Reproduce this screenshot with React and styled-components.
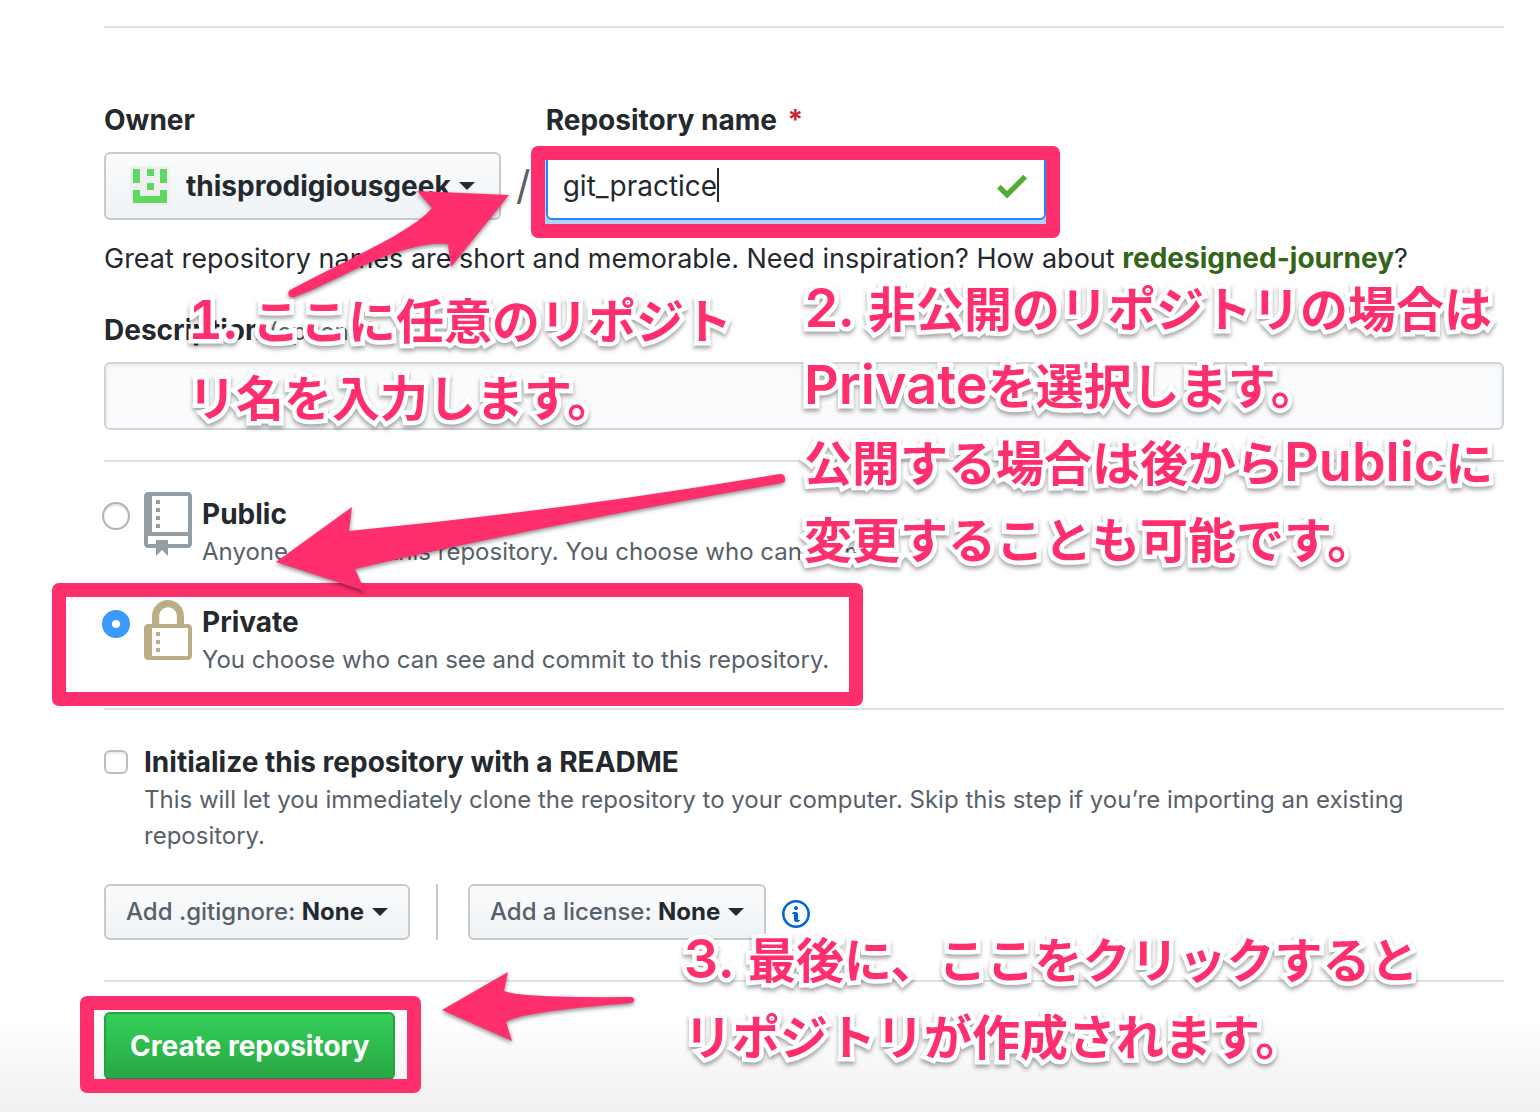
import React, { useState } from "react";
import styled, { createGlobalStyle, css } from "styled-components";

const PINK = "#ff2f6d";
const UI_FONT = 'Inter, "Liberation Sans", sans-serif';

const GlobalStyle = createGlobalStyle`
  * { box-sizing: border-box; }
  body { margin: 0; background: #fff; }
  button, input { font: inherit; }
`;

const Page = styled.div`
  position: relative;
  min-height: 100vh;
  padding: 26px 36px 32px 104px;
  overflow: hidden;
  background: linear-gradient(#fff, #f0f0f0) bottom / 100% 96px no-repeat #fff;
  color: #24292e;
  font-family: ${UI_FONT};
  font-size: 28px;
  line-height: 42px;
`;

const Divider = styled.hr`
  height: 2px;
  margin: 0;
  border: 0;
  background: #dfe2e5;
`;

const Fields = styled.div`
  display: flex;
  padding-top: 71px;
`;

const Field = styled.div`
  display: flex;
  flex-direction: column;
  gap: 11px;
`;

const FieldLabel = styled.label`
  font-weight: 700;
`;

const Required = styled.span`
  margin-left: 4px;
  color: #cb2431;
`;

const Optional = styled.span`
  color: #586069;
  font-size: 24px;
  font-weight: 400;
  line-height: 24px;
`;

const Slash = styled.span`
  align-self: flex-end;
  width: 45px;
  height: 68px;
  color: #586069;
  font-size: 40px;
  line-height: 68px;
  text-align: center;
`;

const MenuButton = styled.button`
  display: flex;
  align-items: center;
  gap: 8px;
  height: ${(p) => (p.$large ? "68px" : "56px")};
  padding: ${(p) => (p.$large ? "0 24px" : "0 20px")};
  border: 2px solid #c8cbce;
  border-radius: 6px;
  background: linear-gradient(#fafbfc, #eff3f6);
  color: ${(p) => (p.$large ? "#24292e" : "#586069")};
  font-size: ${(p) => (p.$large ? "28px" : "24px")};
  font-weight: ${(p) => (p.$large ? 700 : 500)};
  white-space: nowrap;
`;

const MenuValue = styled.span`
  color: #24292e;
  font-weight: 700;
`;

const Caret = styled.span`
  border: 8px solid transparent;
  border-top-color: #24292e;
  border-bottom: 0;
`;

const Avatar = styled.svg`
  width: 40px;
  height: 40px;
  margin-right: 8px;
  border-radius: 3px;
  background: #f0f0f0;
`;

const Highlighted = styled.div`
  position: relative;
  width: fit-content;
`;

const Highlight = styled.div`
  position: absolute;
  inset: ${(p) => p.$inset};
  z-index: 1;
  border: 14px solid ${PINK};
  border-radius: 7px;
  pointer-events: none;
`;

const inputBase = css`
  display: block;
  width: 100%;
  height: 68px;
  padding: 0 15px;
  border: 2px solid #d1d5da;
  border-radius: 6px;
  outline: none;
  color: #24292e;
`;

const NameInput = styled.input`
  ${inputBase}
  width: 500px;
  border-color: #2188ff;
  background: #fff;
  box-shadow: 0 0 0 6px #b3d1f3;
`;

const DescriptionInput = styled.input`
  ${inputBase}
  background: #fafbfc;
  box-shadow: inset 0 2px 4px rgba(27, 31, 35, 0.075);
`;

const TextCursor = styled.span`
  position: absolute;
  top: 16px;
  left: 171px;
  width: 2px;
  height: 34px;
  background: #24292e;
`;

const ValidMark = styled.svg`
  position: absolute;
  top: 14px;
  right: 19px;
  width: 30px;
  height: 40px;
  fill: #55ac32;
`;

const Note = styled.p`
  margin: 18px 0 29px;
  font-size: 27px;
`;

const Suggestion = styled.a`
  color: #336618;
  font-size: 28px;
  font-weight: 700;
  line-height: 28px;
  text-decoration: none;
`;

const Section = styled.section`
  padding: ${(p) => p.$pad};
`;

const Choice = styled.label`
  position: relative;
  display: flex;
  width: fit-content;
  margin-bottom: ${(p) => (p.$gap ? "30px" : 0)};
`;

const Radio = styled.input`
  flex: none;
  width: 28px;
  height: 28px;
  margin: 10px 14px 0 -2px;
  appearance: none;
  border: 2px solid #b4b4b4;
  border-radius: 50%;
  background: #fff;
  box-shadow: inset 0 2px 2px rgba(0, 0, 0, 0.1);

  &:checked {
    border: 10px solid #3b99fc;
    box-shadow: none;
  }
`;

const Checkbox = styled.input`
  flex: none;
  width: 24px;
  height: 24px;
  margin: 10px 16px 0 0;
  appearance: none;
  border: 2px solid #bdbdbd;
  border-radius: 6px;
  background: #fff;
  box-shadow: inset 0 2px 2px rgba(0, 0, 0, 0.08);
`;

const ChoiceIcon = styled.svg`
  flex: none;
  width: 48px;
  height: 64px;
  margin-right: 10px;
  fill: ${(p) => p.$color};
`;

const ChoiceText = styled.span`
  display: flex;
  flex-direction: column;
  padding-top: 2px;
`;

const ChoiceTitle = styled.span`
  font-weight: 700;
  line-height: 40px;
`;

const ChoiceDetail = styled.span`
  color: #586069;
  font-size: 24px;
  line-height: 36px;
`;

const Options = styled.div`
  display: flex;
  align-items: center;
  padding: 30px 0 40px;
`;

const Separator = styled.span`
  width: 2px;
  height: 56px;
  margin: 0 30px 0 26px;
  background: #c6cacd;
`;

const InfoIcon = styled.svg`
  width: 28px;
  height: 32px;
  margin: 4px 0 0 16px;
  fill: #0366d6;
`;

const SubmitButton = styled.button`
  display: block;
  height: 68px;
  padding: 0 24px;
  border: 2px solid #279f43;
  border-bottom-color: #22863a;
  border-radius: 6px;
  background: linear-gradient(#34d058, #28a745);
  color: #fff;
  font-weight: 700;
`;

const Callout = styled.p`
  position: absolute;
  top: ${(p) => p.$top}px;
  left: ${(p) => p.$left}px;
  z-index: 3;
  margin: 0;
  color: ${PINK};
  font-family: Inter, "Noto Sans CJK JP", sans-serif;
  font-size: 48px;
  font-weight: 600;
  line-height: 77px;
  white-space: nowrap;
  paint-order: stroke fill;
  -webkit-text-stroke: 9px #fff;
  filter: drop-shadow(0 3px 2px rgba(0, 0, 0, 0.35));
  pointer-events: none;
`;

const Latin = styled.span`
  font-size: 54px;
  font-variant-numeric: tabular-nums;
  line-height: 48px;
`;

const Arrow = styled.svg`
  position: absolute;
  top: ${(p) => p.$top}px;
  left: ${(p) => p.$left}px;
  z-index: 2;
  fill: ${PINK};
  filter: drop-shadow(0 2px 2px rgba(0, 0, 0, 0.45));
  pointer-events: none;
`;

const REPO_PATH =
  "M4 9H3V8h1v1zm0-3H3v1h1V6zm0-2H3v1h1V4zm0-2H3v1h1V2zm8-1v12c0 .55-.45 1-1 1H6v2l-1.5-1.5L3 16v-2H1c-.55 0-1-.45-1-1V1c0-.55.45-1 1-1h10c.55 0 1 .45 1 1zm-1 10H1v2h2v-1h3v1h5v-2zm0-10H2v9h9V1z";
const LOCK_PATH =
  "M4 13H3v-1h1v1zm8-6v7c0 .55-.45 1-1 1H1c-.55 0-1-.45-1-1V7c0-.55.45-1 1-1h1V4c0-2.2 1.8-4 4-4s4 1.8 4 4v2h1c.55 0 1 .45 1 1zM3.8 6h4.41V4c0-1.22-.98-2.2-2.2-2.2-1.22 0-2.2.98-2.2 2.2v2H3.8zM11 7H2v7h9V7zM4 8H3v1h1V8zm0 2H3v1h1v-1z";
const INFO_PATH =
  "M6.3 5.69a.942.942 0 0 1-.28-.7c0-.28.09-.52.28-.7.19-.18.42-.28.7-.28.28 0 .52.09.7.28.18.19.28.42.28.7 0 .28-.09.52-.28.7a1 1 0 0 1-.7.3c-.28 0-.52-.11-.7-.3zM8 7.99c-.02-.25-.11-.48-.31-.69-.2-.19-.42-.3-.69-.31H6c-.27.02-.48.13-.69.31-.2.2-.3.44-.31.69h1v3c.02.27.11.5.31.69.2.2.42.31.69.31h1c.27 0 .48-.11.69-.31.2-.19.3-.42.31-.69H8V7.98v.01zM7 2.3c-3.14 0-5.7 2.54-5.7 5.68 0 3.14 2.56 5.7 5.7 5.7s5.7-2.55 5.7-5.7c0-3.15-2.56-5.69-5.7-5.69v.01zM7 .98c3.86 0 7 3.14 7 7s-3.14 7-7 7-7-3.12-7-7 3.14-7 7-7z";

export default function App() {
  const [name, setName] = useState("git_practice");
  const [visibility, setVisibility] = useState("private");

  return (
    <>
      <GlobalStyle />
      <Page>
        <Divider />
        <form onSubmit={(e) => e.preventDefault()}>
          <Fields>
            <Field>
              <FieldLabel htmlFor="owner">Owner</FieldLabel>
              <MenuButton id="owner" type="button" $large aria-haspopup="menu">
                <Avatar viewBox="0 0 40 40" aria-hidden="true">
                  <path
                    fill="#5fd85f"
                    d="M3 3h7v14H3zM30 3h7v14h-7zM17 3h7v7h-7zM17 17h7v7h-7zM3 24h7v6h20v-6h7v13H3z"
                  />
                </Avatar>
                thisprodigiousgeek
                <Caret />
              </MenuButton>
            </Field>
            <Slash>/</Slash>
            <Field>
              <FieldLabel htmlFor="name">
                Repository name <Required>*</Required>
              </FieldLabel>
              <Highlighted>
                <NameInput
                  id="name"
                  type="text"
                  value={name}
                  spellCheck={false}
                  onChange={(e) => setName(e.target.value)}
                />
                <TextCursor />
                <ValidMark viewBox="0 0 12 16" aria-hidden="true">
                  <path d="M12 5l-8 8-4-4 1.5-1.5L4 10l6.5-6.5L12 5z" />
                </ValidMark>
                <Highlight $inset="-6px -14px -18px -15px" />
              </Highlighted>
            </Field>
          </Fields>
          <Note>
            Great repository names are short and memorable. Need inspiration?
            How about <Suggestion href="#">redesigned-journey</Suggestion>?
          </Note>
          <Field>
            <FieldLabel htmlFor="description">
              Description <Optional>(optional)</Optional>
            </FieldLabel>
            <DescriptionInput id="description" type="text" />
          </Field>
          <Section $pad="30px 0 0">
            <Divider />
          </Section>
          <Section $pad="30px 0 30px">
            <Choice $gap>
              <Radio
                type="radio"
                name="visibility"
                checked={visibility === "public"}
                onChange={() => setVisibility("public")}
              />
              <ChoiceIcon $color="#959da5" viewBox="0 0 12 16" aria-hidden="true">
                <path d={REPO_PATH} />
              </ChoiceIcon>
              <ChoiceText>
                <ChoiceTitle>Public</ChoiceTitle>
                <ChoiceDetail>
                  Anyone can see this repository. You choose who can commit.
                </ChoiceDetail>
              </ChoiceText>
            </Choice>
            <Choice>
              <Radio
                type="radio"
                name="visibility"
                checked={visibility === "private"}
                onChange={() => setVisibility("private")}
              />
              <ChoiceIcon $color="#b9ae86" viewBox="0 0 12 16" aria-hidden="true">
                <path d={LOCK_PATH} />
              </ChoiceIcon>
              <ChoiceText>
                <ChoiceTitle>Private</ChoiceTitle>
                <ChoiceDetail>
                  You choose who can see and commit to this repository.
                </ChoiceDetail>
              </ChoiceText>
              <Highlight $inset="-17px -34px -28px -52px" />
            </Choice>
          </Section>
          <Divider />
          <Section $pad="30px 0 0">
            <Choice>
              <Checkbox type="checkbox" />
              <ChoiceText>
                <ChoiceTitle>Initialize this repository with a README</ChoiceTitle>
                <ChoiceDetail>
                  This will let you immediately clone the repository to your
                  computer. Skip this step if you’re importing an existing
                  repository.
                </ChoiceDetail>
              </ChoiceText>
            </Choice>
            <Options>
              <MenuButton type="button" aria-haspopup="menu">
                <span>
                  Add .gitignore: <MenuValue>None</MenuValue>
                </span>
                <Caret />
              </MenuButton>
              <Separator />
              <MenuButton type="button" aria-haspopup="menu">
                <span>
                  Add a license: <MenuValue>None</MenuValue>
                </span>
                <Caret />
              </MenuButton>
              <InfoIcon viewBox="0 0 14 16" aria-hidden="true">
                <path d={INFO_PATH} />
              </InfoIcon>
            </Options>
          </Section>
          <Divider />
          <Section $pad="30px 0 0">
            <Highlighted>
              <SubmitButton type="submit">Create repository</SubmitButton>
              <Highlight $inset="-16px -26px -13px -24px" />
            </Highlighted>
          </Section>
        </form>

        <Arrow $top={180} $left={280} width="240" height="130" viewBox="280 180 240 130" aria-hidden="true">
          <path d="M509 195L417 191L432 208C412 232 350 258 290 290Q287 292 289 296Q291 298 295 297C340 280 400 240 448 244L451 267Z" />
        </Arrow>
        <Arrow $top={465} $left={266} width="530" height="136" viewBox="266 465 530 136" aria-hidden="true">
          <path d="M276 562L352 507L349 531Q560 511 780 474Q785 474 785 479Q785 482 782 483Q540 526 355 569L365 591Z" />
        </Arrow>
        <Arrow $top={962} $left={432} width="212" height="90" viewBox="432 962 212 90" aria-hidden="true">
          <path d="M442 1010L508 972L504 991Q520 998 631 997Q634 997 634 1000Q634 1003 631 1003Q520 1012 506 1022L512 1041Z" />
        </Arrow>

        <Callout $top={283} $left={188}>
          <Latin>1. </Latin>ここに任意のリポジト
          <br />
          リ名を入力します。
        </Callout>
        <Callout $top={271} $left={804}>
          <Latin>2. </Latin>非公開のリポジトリの場合は
          <br />
          <Latin>Private</Latin>を選択します。
          <br />
          公開する場合は後から<Latin>Public</Latin>に
          <br />
          変更することも可能です。
        </Callout>
        <Callout $top={922} $left={684}>
          <Latin>3. </Latin>最後に、ここをクリックすると
          <br />
          リポジトリが作成されます。
        </Callout>
      </Page>
    </>
  );
}
